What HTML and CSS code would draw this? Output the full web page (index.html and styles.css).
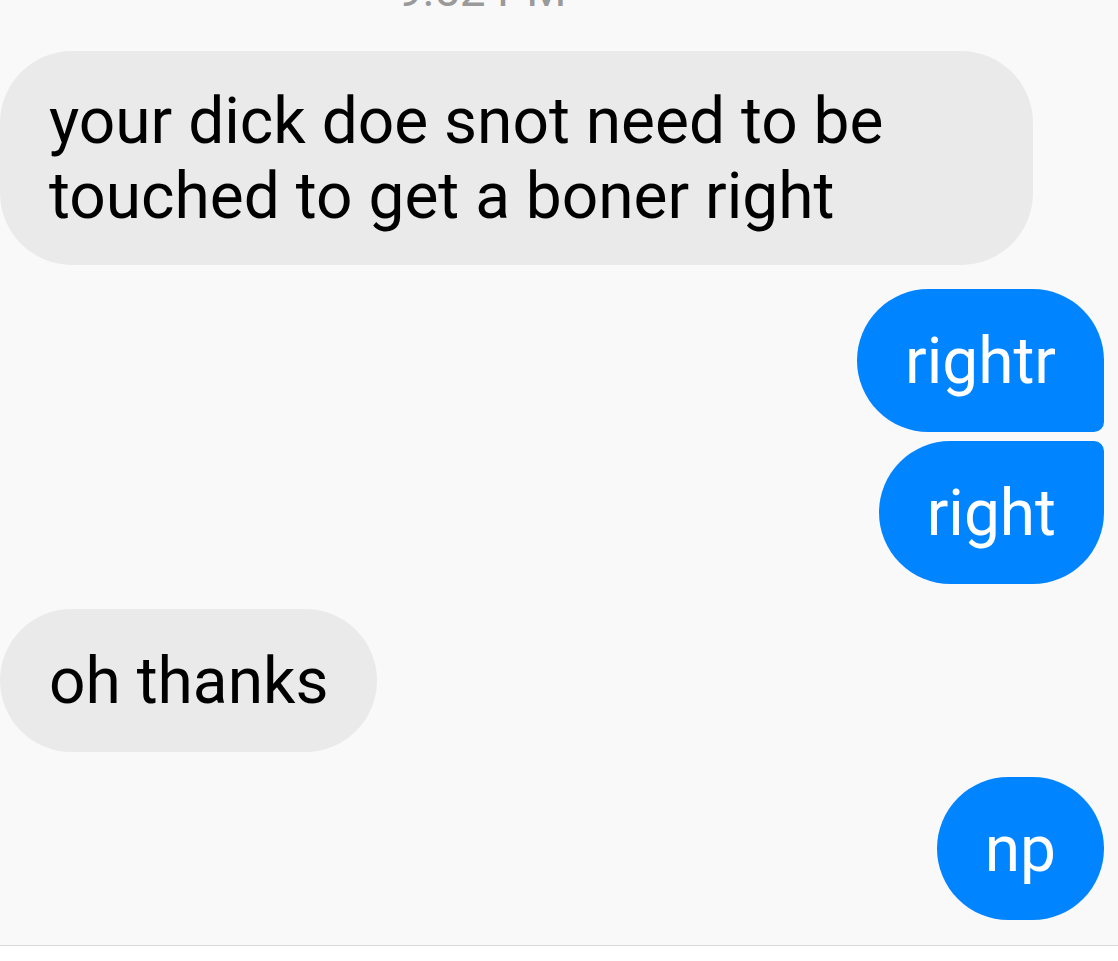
FILE: index.html
```html
<!DOCTYPE html>
<html>
<head>
<meta charset="utf-8">
<link rel="stylesheet" href="styles.css">
</head>
<body>
<div class="screen">
  <div class="chat">
    <div class="stamp">9:52 PM</div>
    <div class="bubble in multi">your dick doe snot need to be touched to get a boner right</div>
    <div class="bubble out first">rightr</div>
    <div class="bubble out last">right</div>
    <div class="bubble in single">oh thanks</div>
    <div class="bubble out solo">np</div>
  </div>
  <div class="footer"></div>
</div>
</body>
</html>
```

FILE: styles.css
```css
html, body {
  margin: 0;
  padding: 0;
  background: #f9f9f9;
}
.screen {
  width: 1118px;
  height: 961px;
  overflow: hidden;
  display: flex;
  flex-direction: column;
  font-family: Roboto, "Liberation Sans", sans-serif;
}
.chat {
  height: 946px;
  display: flex;
  flex-direction: column;
  border-bottom: 1px solid #d9d9d9;
  box-sizing: border-box;
}
.footer {
  flex: 1;
  background: #ffffff;
}
.stamp {
  align-self: flex-start;
  margin-left: 397px;
  margin-top: -32px;
  font-size: 46px;
  line-height: 44px;
  height: 44px;
  color: #9a9a9a;
}
.bubble {
  font-size: 64px;
  line-height: 75px;
  padding: 35px 49px 33px;
  border-radius: 72px;
  max-width: 1033px;
  box-sizing: border-box;
}
.in {
  align-self: flex-start;
  background: #eaeaea;
  color: #000;
}
.out {
  align-self: flex-end;
  margin-right: 14px;
  padding-left: 48px;
  padding-right: 48px;
  background: #0084ff;
  color: #fff;
}
.multi {
  width: 1033px;
  padding-top: 33px;
  padding-bottom: 31px;
  margin-top: 39px;
}
.first {
  margin-top: 24px;
  border-bottom-right-radius: 10px;
}
.last {
  margin-top: 9px;
  border-top-right-radius: 10px;
}
.single {
  margin-top: 25px;
}
.solo {
  margin-top: 25px;
}
```
